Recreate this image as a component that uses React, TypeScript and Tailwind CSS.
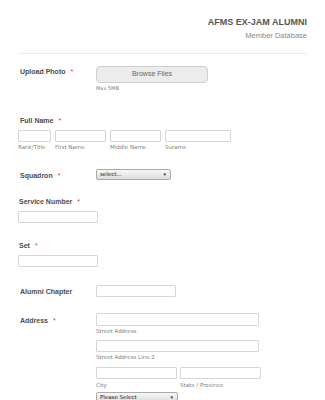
import React from "react";

const labelCls =
  "text-[7px] leading-[8px] font-bold text-[#4d4d4d] [font-family:'Liberation_Sans',Arial,sans-serif]";
const subCls =
  "text-[5.5px] leading-[7px] text-[#808080] [font-family:'DejaVu_Sans',Verdana,sans-serif] whitespace-nowrap";

function Req() {
  return <span className="text-[#e33] ml-[5px] font-normal">*</span>;
}

function Input({ w, h = "h-[12px]" }: { w: string; h?: string }) {
  return <div className={`${w} ${h} border border-[#d6d6d6] bg-white rounded-[1px]`} />;
}

function Select({ w, text }: { w: string; text: string }) {
  return (
    <div
      className={`${w} h-[11px] border border-[#a9a9a9] rounded-[2px] bg-gradient-to-b from-[#f7f7f7] to-[#dcdcdc] flex items-center justify-between px-[3px]`}
    >
      <span className="text-[5.5px] leading-[7px] text-[#222] [font-family:'DejaVu_Sans',Verdana,sans-serif]">
        {text}
      </span>
      <span className="text-[4.5px] leading-[5px] text-[#333]">▼</span>
    </div>
  );
}

export default function App() {
  return (
    <div className="w-[325px] h-[400px] overflow-hidden bg-white">
      {/* Header */}
      <div className="pt-[17px] pr-[18px] text-right [font-family:'Liberation_Sans',Arial,sans-serif]">
        <div className="text-[9px] leading-[11px] font-bold text-[#555]">AFMS EX-JAM ALUMNI</div>
        <div className="text-[7.5px] leading-[9px] text-[#888] mt-[3px]">Member Database</div>
      </div>
      <div className="mx-[18px] mt-[13px] border-t border-[#ececec]" />

      <div className="pl-[18px]">
        {/* Upload photo */}
        <div className="flex mt-[12px]">
          <div className={`${labelCls} w-[78px] pl-[2px] pt-[2px]`}>
            Upload Photo<Req />
          </div>
          <div className="flex flex-col">
            <div className="w-[112px] h-[17px] rounded-[4px] border border-[#cfcfcf] bg-[#ececec] flex items-center justify-center text-[7px] text-[#666] [font-family:'Liberation_Sans',Arial,sans-serif]">
              Browse Files
            </div>
            <div className={`${subCls} text-[5px] mt-[2px]`}>Max 5MB</div>
          </div>
        </div>

        {/* Full name */}
        <div className={`${labelCls} mt-[25px] pl-[2px]`}>
          Full Name<Req />
        </div>
        <div className="flex gap-[4px] mt-[5px]">
          <div className="flex flex-col">
            <Input w="w-[33px]" />
            <div className={`${subCls} mt-[2px]`}>Rank/Title</div>
          </div>
          <div className="flex flex-col">
            <Input w="w-[51px]" />
            <div className={`${subCls} mt-[2px]`}>First Name</div>
          </div>
          <div className="flex flex-col">
            <Input w="w-[51px]" />
            <div className={`${subCls} mt-[2px]`}>Middle Name</div>
          </div>
          <div className="flex flex-col">
            <Input w="w-[66px]" />
            <div className={`${subCls} mt-[2px]`}>Surame</div>
          </div>
        </div>

        {/* Squadron */}
        <div className="flex mt-[18px]">
          <div className={`${labelCls} w-[78px] pl-[2px] pt-[3px]`}>
            Squadron<Req />
          </div>
          <Select w="w-[75px]" text="select..." />
        </div>

        {/* Service Number */}
        <div className={`${labelCls} mt-[18px] pl-[1px]`}>
          Service Number<Req />
        </div>
        <div className="mt-[5px]">
          <Input w="w-[80px]" />
        </div>

        {/* Set */}
        <div className={`${labelCls} mt-[19px] pl-[1px]`}>
          Set<Req />
        </div>
        <div className="mt-[5px]">
          <Input w="w-[80px]" />
        </div>

        {/* Alumni Chapter */}
        <div className="flex mt-[18px]">
          <div className={`${labelCls} w-[78px] pl-[2px] pt-[3px]`}>Alumni Chapter</div>
          <Input w="w-[80px]" />
        </div>

        {/* Address */}
        <div className="flex mt-[16px]">
          <div className={`${labelCls} w-[78px] pl-[2px] pt-[4px]`}>
            Address<Req />
          </div>
          <div className="flex flex-col">
            <Input w="w-[163px]" h="h-[13px]" />
            <div className={`${subCls} mt-[2px]`}>Street Address</div>
            <div className="mt-[5px]">
              <Input w="w-[163px]" h="h-[12px]" />
            </div>
            <div className={`${subCls} mt-[2px]`}>Street Address Line 2</div>
            <div className="flex gap-[3px] mt-[6px]">
              <div className="flex flex-col">
                <Input w="w-[81px]" />
                <div className={`${subCls} mt-[3px]`}>City</div>
              </div>
              <div className="flex flex-col">
                <Input w="w-[81px]" />
                <div className={`${subCls} mt-[3px]`}>State / Province</div>
              </div>
            </div>
            <div className="mt-[3px]">
              <Select w="w-[82px]" text="Please Select" />
            </div>
          </div>
        </div>
      </div>
    </div>
  );
}
